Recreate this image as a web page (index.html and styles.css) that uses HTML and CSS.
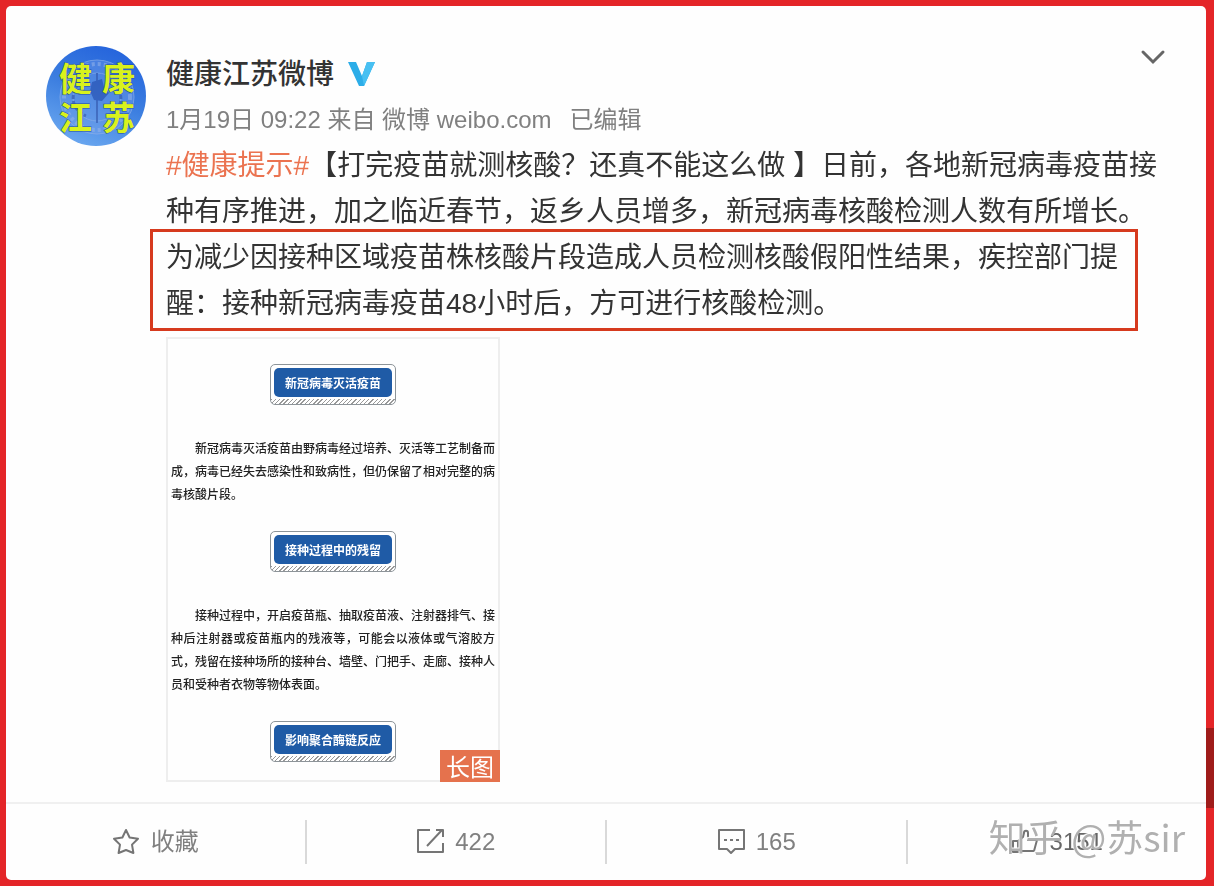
FILE: index.html
```html
<!DOCTYPE html>
<html lang="zh-CN">
<head>
    <meta charset="UTF-8">
    <meta name="viewport" content="width=device-width, initial-scale=1.0">
    <title>健康江苏微博</title>
    <link rel="stylesheet" href="styles.css">
</head>
<body>
    <div class="page-tab"></div>

    <article class="card">
        <div class="post">
            <svg class="avatar" viewBox="0 0 100 100" role="img" aria-label="健康江苏">
                <defs>
                    <linearGradient id="sky" x1="0.7" y1="0" x2="0.3" y2="1">
                        <stop offset="0" stop-color="#2463dc"/>
                        <stop offset="0.5" stop-color="#3d7fe0"/>
                        <stop offset="1" stop-color="#6ba8f0"/>
                    </linearGradient>
                </defs>
                <circle cx="50" cy="50" r="50" fill="url(#sky)"/>
                <g fill="none" stroke="#8fb0ea" opacity="0.7">
                    <circle cx="51" cy="51" r="37" fill="#7ba4ea" fill-opacity="0.5"/>
                    <circle cx="51" cy="51" r="33" stroke-width="4" stroke-dasharray="3 3"/>
                    <circle cx="51" cy="51" r="24"/>
                    <path d="M32 38c-9 14-5 26 8 32M70 38c9 14 5 26-8 32" stroke="#3f62b4" stroke-width="3" stroke-dasharray="4 2"/>
                    <path d="M51 27v50" stroke="#3f62b4" stroke-width="2"/>
                    <path d="M46 36l10-3 2 8 5 6-7 8-8-1-4-9z" fill="#3159b5" stroke="none"/>
                </g>
                <g class="avatar-text">
                    <text x="13" y="45">健</text>
                    <text x="56" y="45">康</text>
                    <text x="13" y="84">江</text>
                    <text x="56" y="84">苏</text>
                </g>
            </svg>

            <div class="post-main">
                <header class="post-head">
                    <div class="author">
                        <a class="name" href="#">健康江苏微博</a>
                        <svg class="verified" viewBox="0 0 28 26" aria-hidden="true">
                            <path d="M0 0h8l6 14 5-14h8L16 24h-5z" fill="#2cade8"/>
                            <path d="M14 14l5-14h8L16 24z" fill="#48c0f2"/>
                        </svg>
                    </div>
                    <button class="more" type="button" aria-label="更多">
                        <svg viewBox="0 0 26 16" aria-hidden="true"><path d="M3 3l10 10L23 3"/></svg>
                    </button>
                </header>

                <div class="meta">
                    <span>1月19日 09:22 来自 <a href="#">微博 weibo.com</a></span>
                    <span>已编辑</span>
                </div>

                <div class="content">
                    <p><a class="topic" href="#">#健康提示#</a>【打完疫苗就测核酸？还真不能这么做 】日前，各地新冠病毒疫苗接种有序推进，加之临近春节，返乡人员增多，新冠病毒核酸检测人数有所增长。为减少因接种区域疫苗株核酸片段造成人员检测核酸假阳性结果，疾控部门提醒：接种新冠病毒疫苗48小时后，方可进行核酸检测。</p>
                    <div class="highlight"></div>
                </div>

                <div class="long-image">
                    <h3><span>新冠病毒灭活疫苗</span></h3>
                    <p>新冠病毒灭活疫苗由野病毒经过培养、灭活等工艺制备而成，病毒已经失去感染性和致病性，但仍保留了相对完整的病毒核酸片段。</p>
                    <h3><span>接种过程中的残留</span></h3>
                    <p>接种过程中，开启疫苗瓶、抽取疫苗液、注射器排气、接种后注射器或疫苗瓶内的残液等，可能会以液体或气溶胶方式，残留在接种场所的接种台、墙壁、门把手、走廊、接种人员和受种者衣物等物体表面。</p>
                    <h3><span>影响聚合酶链反应</span></h3>
                    <span class="tag">长图</span>
                </div>
            </div>
        </div>

        <footer class="actions">
            <button type="button">
                <svg viewBox="0 0 28 28" aria-hidden="true"><path d="M14 2l3.600 7.500 8.400 1.200-6 5.900 1.400 8.400L14 22l-7.400 3L8 16.600 2 10.700 10.400 9.500z"/></svg>
                收藏
            </button>
            <button type="button">
                <svg viewBox="0 0 28 28" aria-hidden="true"><path d="M14 2H2v22h25v-9M11 18L26 2M20 2h7v7"/></svg>
                422
            </button>
            <button type="button">
                <svg viewBox="0 0 28 28" aria-hidden="true"><path d="M2 2h25v19h-9l-4 4-4-4H2z"/><path d="M7 12h3M13 12h3M19 12h3"/></svg>
                165
            </button>
            <button type="button" class="like">
                <svg viewBox="0 0 28 28" aria-hidden="true"><path d="M2 13h5v11H2zM7 23h16l3-11h-9V5c0-3-4-3-4 0l-1 4-5 4"/></svg>
                3151
            </button>
        </footer>

        <div class="watermark">知乎 @苏sir</div>
    </article>
</body>
</html>
```

FILE: styles.css
```css
* {
    margin: 0;
    padding: 0;
    box-sizing: border-box;
}

body {
    font-family: "Liberation Sans", "Noto Sans CJK SC", sans-serif;
    background: #e42528;
    min-height: 100vh;
    padding: 6px 8px 6px 6px;
    color: #333;
}

a {
    color: inherit;
    text-decoration: none;
}

button {
    font: inherit;
    color: inherit;
    background: none;
    border: none;
    cursor: pointer;
}

.page-tab {
    position: fixed;
    right: 0;
    bottom: 78px;
    width: 12px;
    height: 80px;
    background: #9f1c1a;
}

.card {
    position: relative;
    background: #fefefe;
    border-radius: 5px;
}

.post {
    display: flex;
    gap: 20px;
    padding: 40px 40px 20px;
}

.avatar {
    flex: none;
    width: 100px;
    height: 100px;
}

.avatar-text {
    font-family: "Noto Sans CJK SC", sans-serif;
    font-size: 33px;
    font-weight: 700;
    fill: #d9f21c;
    stroke: #27509a;
    stroke-width: 1px;
    paint-order: stroke;
}

.post-main {
    flex: 1;
    min-width: 0;
}

.post-head {
    display: flex;
    justify-content: space-between;
    align-items: flex-start;
    height: 51px;
}

.author {
    display: flex;
    align-items: center;
    gap: 14px;
    padding-top: 9px;
}

.name {
    font-size: 28px;
    line-height: 40px;
    font-weight: 500;
}

.verified {
    width: 28px;
    height: 26px;
}

.more {
    display: flex;
    padding: 3px 0;
}

.more svg {
    width: 26px;
    height: 16px;
    fill: none;
    stroke: #666;
    stroke-width: 3px;
    stroke-linecap: round;
}

.meta {
    display: flex;
    gap: 18px;
    font-size: 24px;
    line-height: 46px;
    color: #808080;
}

.content {
    position: relative;
    font-size: 28px;
    line-height: 46px;
}

.topic {
    color: #eb7350;
}

/* red frame around the last two lines */
.highlight {
    position: absolute;
    top: 86px;
    right: 28px;
    bottom: -4px;
    left: -16px;
    border: 3px solid #d63a1e;
}

.long-image {
    position: relative;
    width: 334px;
    margin-top: 10px;
    padding: 25px 3px 18px;
    border: 2px solid #eee;
    font-family: "Noto Sans CJK SC", sans-serif;
    font-size: 12px;
    color: #222;
}

.long-image h3 {
    width: 126px;
    margin: 0 auto;
    padding: 3px 3px 7px;
    border: 1px solid #8d9499;
    border-radius: 5px;
    font-size: 12px;
    line-height: 29px;
    text-align: center;
    color: #fff;
    background: linear-gradient(#fff, #fff) top / 100% 34px no-repeat,
        repeating-linear-gradient(135deg, #999 0 1px, #fff 1px 3px);
}

.long-image h3 span {
    display: block;
    border-radius: 5px;
    background: #1f5ba6;
}

.long-image p {
    padding: 31px 0 26px;
    line-height: 23px;
    font-weight: 500;
    text-align: justify;
    text-indent: 2em;
}

.tag {
    position: absolute;
    right: -2px;
    bottom: -2px;
    width: 60px;
    font-size: 24px;
    line-height: 32px;
    text-align: center;
    color: #fff;
    background: #e5724d;
}

.actions {
    display: flex;
    border-top: 2px solid #f0f0f0;
    padding: 16px 0;
}

.actions button {
    flex: 1;
    display: flex;
    align-items: center;
    justify-content: center;
    gap: 11px;
    height: 44px;
    font-size: 24px;
    line-height: 44px;
    color: #808080;
}

.actions button + button {
    border-left: 2px solid #d9d9d9;
}

.actions svg {
    width: 28px;
    height: 28px;
    fill: none;
    stroke: #757575;
    stroke-width: 2px;
    stroke-linejoin: round;
}

.actions .like {
    color: #666;
}

.watermark {
    position: absolute;
    right: 21px;
    bottom: 21px;
    font-family: "Noto Sans CJK SC", sans-serif;
    font-size: 37px;
    line-height: 46px;
    color: #b0b0b0;
    text-shadow: -1px -1px 1px #fff;
    pointer-events: none;
}
```
